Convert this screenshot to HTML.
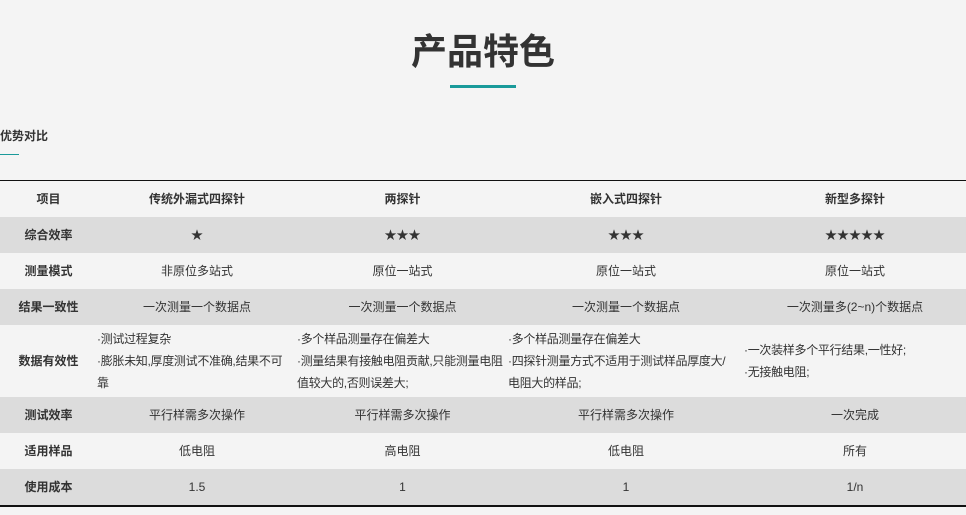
<!DOCTYPE html>
<html><head><meta charset="utf-8"><style>
body{margin:0;width:966px;height:515px;background:#f4f4f4;font-family:"Liberation Sans","Noto Sans CJK SC",sans-serif;color:#333;position:relative;overflow:hidden}
.t{position:absolute;left:0;right:0;top:28px;text-align:center;font-size:36px;font-weight:bold;color:#333;line-height:48px}
.ul{position:absolute;left:450px;top:85px;width:66px;height:3px;background:#1a9a9a}
.h{position:absolute;left:0;top:127px;font-size:12px;font-weight:bold;line-height:18px}
.hl{position:absolute;left:0;top:154px;width:19px;height:1px;background:#1a9a9a}
table{position:absolute;left:0;top:180px;width:966px;border-collapse:collapse;border-top:1px solid #111;border-bottom:2px solid #111;font-size:12px;table-layout:fixed}
td{height:36px;padding:0;text-align:center;line-height:18px}
td:first-child{font-weight:bold}
tr.g{background:#dcdcdc}
tr.hd td{font-weight:bold}
td.l{text-align:left;line-height:22px;vertical-align:middle;white-space:nowrap;overflow:hidden;letter-spacing:-0.3px}
</style></head><body>
<div class="t">产品特色</div><div class="ul"></div>
<div class="h">优势对比</div><div class="hl"></div>
<table>
<colgroup><col style="width:97px"><col style="width:200px"><col style="width:211px"><col style="width:236px"><col></colgroup>
<tr class="hd"><td>项目</td><td>传统外漏式四探针</td><td>两探针</td><td>嵌入式四探针</td><td>新型多探针</td></tr>
<tr class="g"><td>综合效率</td><td>★</td><td>★★★</td><td>★★★</td><td>★★★★★</td></tr>
<tr><td>测量模式</td><td>非原位多站式</td><td>原位一站式</td><td>原位一站式</td><td>原位一站式</td></tr>
<tr class="g"><td>结果一致性</td><td>一次测量一个数据点</td><td>一次测量一个数据点</td><td>一次测量一个数据点</td><td>一次测量多(2~n)个数据点</td></tr>
<tr><td style="height:72px">数据有效性</td><td class="l">·测试过程复杂<br>·膨胀未知,厚度测试不准确,结果不可<br>靠</td><td class="l">·多个样品测量存在偏差大<br>·测量结果有接触电阻贡献,只能测量电阻<br>值较大的,否则误差大;</td><td class="l">·多个样品测量存在偏差大<br>·四探针测量方式不适用于测试样品厚度大/<br>电阻大的样品;</td><td class="l">·一次装样多个平行结果,一性好;<br>·无接触电阻;</td></tr>
<tr class="g"><td>测试效率</td><td>平行样需多次操作</td><td>平行样需多次操作</td><td>平行样需多次操作</td><td>一次完成</td></tr>
<tr><td>适用样品</td><td>低电阻</td><td>高电阻</td><td>低电阻</td><td>所有</td></tr>
<tr class="g"><td>使用成本</td><td>1.5</td><td>1</td><td>1</td><td>1/n</td></tr>
</table>
</body></html>
